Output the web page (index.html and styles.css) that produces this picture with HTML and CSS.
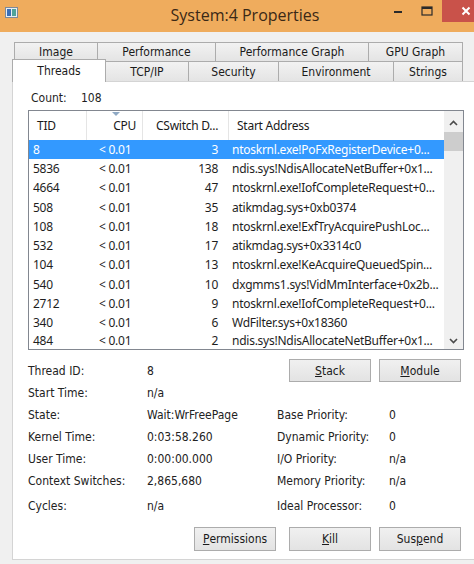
FILE: index.html
```html
<!DOCTYPE html>
<html>
<head>
<meta charset="utf-8">
<title>System:4 Properties</title>
<link rel="stylesheet" href="styles.css">
</head>
<body>
<div class="window">
  <div class="titlebar">
    <div class="app-icon">
      <svg width="13" height="11" viewBox="0 0 13 11">
        <rect x="0.5" y="0.5" width="12" height="10" fill="#e8eef4" stroke="#7d8a99"/>
        <rect x="2" y="2" width="4" height="7" fill="#3a6fb8"/>
        <rect x="7" y="2" width="4" height="7" fill="#4fa39a"/>
      </svg>
    </div>
    <div class="title">System:4 Properties</div>
    <div class="controls">
      <div class="ctl ctl-min">
        <svg width="10" height="3" viewBox="0 0 10 3"><rect x="1" y="0" width="8" height="2" fill="#2a2a2a"/></svg>
      </div>
      <div class="ctl ctl-max">
        <svg width="12" height="10" viewBox="0 0 12 10"><rect x="1" y="1" width="10" height="8" fill="none" stroke="#2a2a2a" stroke-width="1.2"/><rect x="1" y="1" width="10" height="2" fill="#2a2a2a"/></svg>
      </div>
      <div class="ctl ctl-close">
        <svg width="10" height="10" viewBox="0 0 10 10"><path d="M1.5 1.5 L8.5 8.5 M8.5 1.5 L1.5 8.5" stroke="#ffffff" stroke-width="2"/></svg>
      </div>
    </div>
  </div>

  <div class="tabs">
    <div class="tab-row tab-row-back">
      <div class="tab t-image">Image</div>
      <div class="tab t-perf">Performance</div>
      <div class="tab t-pgraph">Performance Graph</div>
      <div class="tab t-gpu tab-last">GPU Graph</div>
    </div>
    <div class="tab-row tab-row-front">
      <div class="tab t-threads tab-selected">Threads</div>
      <div class="tab t-tcp">TCP/IP</div>
      <div class="tab t-sec">Security</div>
      <div class="tab t-env">Environment</div>
      <div class="tab t-str tab-last">Strings</div>
    </div>
  </div>

  <div class="panel">
    <div class="count"><span class="count-label">Count:</span><span>108</span></div>

    <div class="listbox">
      <div class="list-main">
        <div class="list-header">
          <div class="hcell h-tid">TID</div>
          <div class="hcell h-cpu">CPU<span class="sort-arrow"></span></div>
          <div class="hcell h-csw">CSwitch D...</div>
          <div class="hcell h-addr">Start Address</div>
        </div>
        <div class="list-rows">
          <div class="row row-selected"><div class="c c-tid">8</div><div class="c c-cpu">&lt; 0.01</div><div class="c c-csw">3</div><div class="c c-addr">ntoskrnl.exe!PoFxRegisterDevice+0...</div></div>
          <div class="row"><div class="c c-tid">5836</div><div class="c c-cpu">&lt; 0.01</div><div class="c c-csw">138</div><div class="c c-addr">ndis.sys!NdisAllocateNetBuffer+0x1...</div></div>
          <div class="row"><div class="c c-tid">4664</div><div class="c c-cpu">&lt; 0.01</div><div class="c c-csw">47</div><div class="c c-addr">ntoskrnl.exe!IofCompleteRequest+0...</div></div>
          <div class="row"><div class="c c-tid">508</div><div class="c c-cpu">&lt; 0.01</div><div class="c c-csw">35</div><div class="c c-addr">atikmdag.sys+0xb0374</div></div>
          <div class="row"><div class="c c-tid">108</div><div class="c c-cpu">&lt; 0.01</div><div class="c c-csw">18</div><div class="c c-addr">ntoskrnl.exe!ExfTryAcquirePushLoc...</div></div>
          <div class="row"><div class="c c-tid">532</div><div class="c c-cpu">&lt; 0.01</div><div class="c c-csw">17</div><div class="c c-addr">atikmdag.sys+0x3314c0</div></div>
          <div class="row"><div class="c c-tid">104</div><div class="c c-cpu">&lt; 0.01</div><div class="c c-csw">13</div><div class="c c-addr">ntoskrnl.exe!KeAcquireQueuedSpin...</div></div>
          <div class="row"><div class="c c-tid">540</div><div class="c c-cpu">&lt; 0.01</div><div class="c c-csw">10</div><div class="c c-addr">dxgmms1.sys!VidMmInterface+0x2b...</div></div>
          <div class="row"><div class="c c-tid">2712</div><div class="c c-cpu">&lt; 0.01</div><div class="c c-csw">9</div><div class="c c-addr">ntoskrnl.exe!IofCompleteRequest+0...</div></div>
          <div class="row"><div class="c c-tid">340</div><div class="c c-cpu">&lt; 0.01</div><div class="c c-csw">6</div><div class="c c-addr">WdFilter.sys+0x18360</div></div>
          <div class="row row-last"><div class="c c-tid">484</div><div class="c c-cpu">&lt; 0.01</div><div class="c c-csw">2</div><div class="c c-addr">ndis.sys!NdisAllocateNetBuffer+0x1...</div></div>
        </div>
      </div>
      <div class="scrollbar">
        <div class="sb-btn sb-up">
          <svg width="9" height="6" viewBox="0 0 9 6"><path d="M1 5 L4.5 1.5 L8 5" fill="none" stroke="#4a4a4a" stroke-width="1.6"/></svg>
        </div>
        <div class="sb-track"><div class="sb-thumb"></div></div>
        <div class="sb-btn sb-down">
          <svg width="9" height="6" viewBox="0 0 9 6"><path d="M1 1 L4.5 4.5 L8 1" fill="none" stroke="#4a4a4a" stroke-width="1.6"/></svg>
        </div>
      </div>
    </div>

    <div class="details">
      <div class="lbl r1">Thread ID:</div><div class="val r1">8</div>
      <div class="top-buttons">
        <button class="btn"><u>S</u>tack</button>
        <button class="btn"><u>M</u>odule</button>
      </div>
      <div class="lbl">Start Time:</div><div class="val">n/a</div><div></div><div></div>
      <div class="lbl">State:</div><div class="val">Wait:WrFreePage</div><div class="lbl">Base Priority:</div><div class="val">0</div>
      <div class="lbl">Kernel Time:</div><div class="val">0:03:58.260</div><div class="lbl">Dynamic Priority:</div><div class="val">0</div>
      <div class="lbl">User Time:</div><div class="val">0:00:00.000</div><div class="lbl">I/O Priority:</div><div class="val">n/a</div>
      <div class="lbl">Context Switches:</div><div class="val">2,865,680</div><div class="lbl">Memory Priority:</div><div class="val">n/a</div>
      <div class="lbl">Cycles:</div><div class="val">n/a</div><div class="lbl">Ideal Processor:</div><div class="val">0</div>
    </div>

    <div class="actions">
      <button class="btn btn-perm"><u>P</u>ermissions</button>
      <button class="btn"><u>K</u>ill</button>
      <button class="btn">Sus<u>p</u>end</button>
    </div>
  </div>
</div>
</body>
</html>
```

FILE: styles.css
```css
* { box-sizing: border-box; }
html, body { margin: 0; padding: 0; }
body {
  width: 474px;
  height: 564px;
  overflow: hidden;
  background: #f0f0f0;
  font-family: "DejaVu Sans Condensed", "DejaVu Sans", sans-serif;
  color: #1e1e1e;
}
.window {
  width: 474px;
  height: 564px;
  overflow: hidden;
  background: #f0f0f0;
}

/* Title bar */
.titlebar {
  height: 32px;
  background: #efac5d;
  display: flex;
  align-items: flex-start;
}
.app-icon {
  width: 24px;
  padding: 7px 0 0 5px;
  line-height: 0;
}
.title {
  flex: 1;
  text-align: center;
  padding-left: 82px;
  font-family: "Open Sans", "Noto Sans", sans-serif;
  font-size: 16px;
  line-height: 31px;
  color: #3a2816;
  white-space: nowrap;
}
.controls {
  display: flex;
  width: 90px;
  align-items: flex-start;
}
.ctl {
  height: 22px;
  display: flex;
  align-items: center;
  justify-content: center;
  line-height: 0;
}
.ctl-min { width: 28px; padding-top: 3px; }
.ctl-max { width: 30px; padding-bottom: 1px; }
.ctl-close {
  width: 32px;
  background: #c9524a;
  justify-content: flex-start;
  padding-left: 19px;
}

/* Tabs */
.tabs {
  margin: 10px 0 0 14px;
  width: 449px;
}
.tab-row { display: flex; }
.tab-row-back { height: 19px; }
.tab-row-front { height: 20px; }
.tab {
  border: 1px solid #acacac;
  border-right: none;
  border-bottom: none;
  background: linear-gradient(#f2f2f2, #e4e4e4);
  font-size: 12px;
  display: flex;
  align-items: center;
  justify-content: center;
  color: #1a1a1a;
  white-space: nowrap;
}
.tab-last { border-right: 1px solid #acacac; }
.t-image { width: 83px; }
.t-perf { width: 118px; }
.t-pgraph { width: 153px; }
.t-gpu { width: 95px; }
.t-threads { width: 94px; margin-left: -2px; }
.t-tcp { width: 82px; }
.t-sec { width: 90px; }
.t-env { width: 115px; }
.t-str { width: 70px; }
.tab-selected {
  position: relative;
  z-index: 1;
  height: 23px;
  margin-top: -2px;
  background: #ffffff;
  border-right: 1px solid #acacac;
  padding-bottom: 1px;
}
.tab-selected + .tab { border-left: none; }

/* Panel */
.panel {
  margin-left: 12px;
  width: 470px;
  height: 479px;
  background: #ffffff;
  border: 1px solid #d4d4d4;
  padding: 8px 0 0 15px;
}
.count {
  display: flex;
  align-items: center;
  height: 16px;
  padding-left: 3px;
  font-size: 12px;
}
.count-label { width: 50px; }

/* List */
.listbox {
  margin-top: 4px;
  width: 436px;
  height: 240px;
  border: 1px solid #828790;
  display: flex;
  overflow: hidden;
  font-family: "Noto Sans", "Open Sans", sans-serif;
  font-size: 12px;
  letter-spacing: -0.25px;
}
.list-main {
  width: 415px;
  overflow: hidden;
}
.list-header,
.row {
  display: grid;
  grid-template-columns: 58px 56px 86px 215px;
}
.list-header { height: 29px; }
.hcell {
  position: relative;
  display: flex;
  align-items: center;
  border-right: 1px solid #e5e5e5;
  white-space: nowrap;
  color: #1a1a1a;
}
.h-tid { padding-left: 8px; }
.h-cpu { justify-content: flex-end; padding-right: 6px; }
.h-csw { padding-left: 13px; }
.h-addr { padding-left: 8px; border-right: none; }
.sort-arrow {
  position: absolute;
  top: 1px;
  left: 25px;
  width: 0;
  height: 0;
  border-left: 4px solid transparent;
  border-right: 4px solid transparent;
  border-top: 4px solid #8fa9c4;
}
.row {
  height: 19.3px;
  color: #1e1e1e;
}
.row-last { height: 16px; }
.row-selected {
  background: #3399ff;
  color: #ffffff;
}
.c {
  display: flex;
  align-items: center;
  white-space: nowrap;
  overflow: hidden;
  line-height: 14px;
}
.c-tid { padding-left: 4px; }
.c-cpu { padding-left: 12px; }
.c-csw { justify-content: flex-end; padding-right: 11px; }
.c-addr { padding-left: 3px; }

.scrollbar {
  width: 19px;
  background: #f0f0f0;
  display: flex;
  flex-direction: column;
}
.sb-btn {
  display: flex;
  align-items: center;
  justify-content: center;
  line-height: 0;
}
.sb-up { height: 20px; padding-top: 4px; }
.sb-track { flex: 1; }
.sb-thumb {
  margin-top: 1px;
  height: 19px;
  background: #cdcdcd;
}
.sb-down { height: 17px; }

/* Details */
.details {
  margin-top: 9px;
  width: 436px;
  display: grid;
  grid-template-columns: 119px 130px 112px 75px;
  grid-template-rows: 23px 22px 22px 22px 22px 22px 28px;
  font-size: 12px;
  color: #222222;
}
.lbl, .val {
  display: flex;
  align-items: center;
  white-space: nowrap;
}
.top-buttons {
  grid-column: 3 / 5;
  grid-row: 1;
  display: flex;
  justify-content: flex-end;
  gap: 8px;
  padding-right: 3px;
}

.btn {
  width: 82px;
  height: 23px;
  padding: 0;
  border: 1px solid #acacac;
  background: linear-gradient(#f0f0f0, #e3e3e3);
  font-family: "DejaVu Sans Condensed", "DejaVu Sans", sans-serif;
  font-size: 12px;
  color: #1a1a1a;
  display: flex;
  align-items: center;
  justify-content: center;
}
.actions {
  margin-top: 7px;
  width: 436px;
  display: flex;
  justify-content: flex-end;
  gap: 8px;
  padding-right: 3px;
}
.actions .btn { height: 24px; }
.btn-perm { margin-right: 5px; }
```
